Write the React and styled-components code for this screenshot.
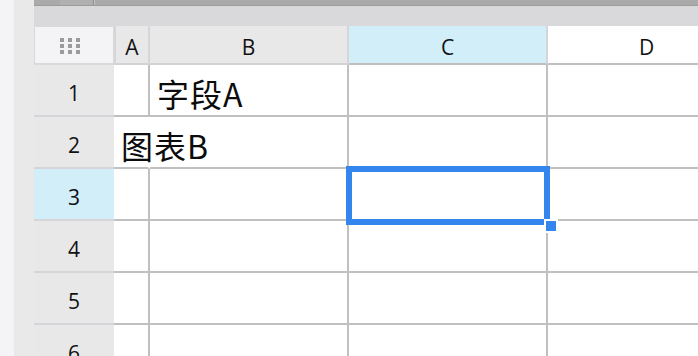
import React from "react";
import styled, { createGlobalStyle } from "styled-components";

const Global = createGlobalStyle`
  html, body { margin: 0; padding: 0; height: 100%; overflow: hidden; background: #ffffff; }
  body { font-family: "Open Sans", "Noto Sans CJK SC", sans-serif; }
  #root { height: 100%; }
`;

const GRID = "#c0c0c0";
const HEAD_BG = "#e8e8e8";
const HEAD_LINE = "#d6d6da";
const ACTIVE = "#d1eef9";
const BLUE = "#3585ef";

const Page = styled.div`
  display: flex;
  height: 356px;
  overflow: hidden;
`;

const Gutter = styled.div`
  flex: 0 0 14px;
  background: #f4f4f6;
`;

const Rail = styled.div`
  flex: 0 0 20px;
  background: #e9e9ea;
`;

const Main = styled.div`
  flex: 1;
  display: flex;
  flex-direction: column;
  min-width: 0;
  overflow: hidden;
`;

const TopBar = styled.div`
  height: 5px;
  flex: 0 0 5px;
  background: #aaaaaa;
  border-bottom: 1px solid #9c9c9c;
  display: flex;
`;

const TabThumb = styled.div`
  margin-left: 26px;
  width: 33px;
  background: #b0b0b0;
`;

const TabDivider = styled.div`
  width: 1px;
  background: #8e8e8e;
  border-right: 1px solid #c4c4c4;
`;

const Band = styled.div`
  height: 20px;
  flex: 0 0 20px;
  background: #d9d9db;
`;

const SheetWrap = styled.div`
  position: relative;
  flex: 1;
`;

const Sheet = styled.div`
  display: grid;
  grid-template-columns: 80px 36px 199px 199px 199px;
  grid-template-rows: 39px repeat(6, 52px);
  background: #ffffff;
`;

const Corner = styled.div`
  box-sizing: border-box;
  background: #f4f4f6;
  border: 1px solid #d9d9dd;
  border-bottom-width: 2px;
  display: flex;
  align-items: center;
  justify-content: center;
  padding-right: 8px;
  padding-top: 2px;
`;

const Dots = styled.div`
  display: grid;
  grid-template-columns: repeat(3, 4px);
  grid-auto-rows: 4px;
  column-gap: 4px;
  row-gap: 2px;
`;

const Dot = styled.span`
  background: #9b9b9b;
`;

const ColHeader = styled.div`
  box-sizing: border-box;
  background: ${(p) => (p.$active ? ACTIVE : p.$plain ? "#ffffff" : HEAD_BG)};
  border-right: 2px solid ${(p) => (p.$plain ? "transparent" : HEAD_LINE)};
  border-bottom: 2px solid ${(p) => (p.$plain || p.$active ? GRID : "#d3d3d6")};
  border-left: ${(p) => (p.$first ? `2px solid ${HEAD_LINE}` : "none")};
  display: flex;
  align-items: center;
  justify-content: center;
  padding-top: 5px;
  font-size: 21px;
  color: #111;
`;

const RowHeader = styled.div`
  box-sizing: border-box;
  background: ${(p) => (p.$active ? ACTIVE : HEAD_BG)};
  border-bottom: 2px solid ${HEAD_LINE};
  display: flex;
  align-items: center;
  justify-content: center;
  padding-top: 6px;
  font-size: 21px;
  color: #111;
`;

const Cell = styled.div`
  box-sizing: border-box;
  border-right: 2px solid ${(p) => (p.$open ? "transparent" : GRID)};
  border-bottom: 2px solid ${GRID};
  display: flex;
  align-items: flex-end;
  padding: 0 0 3px 7px;
  white-space: nowrap;
  overflow: visible;
  font-family: "Noto Sans CJK SC", "Noto Sans", sans-serif;
  font-size: 32px;
  letter-spacing: 1px;
  line-height: 1.2;
  color: #0c0c0c;
  min-width: 0;
`;

const Selection = styled.div`
  position: absolute;
  left: 312px;
  top: 140px;
  width: 204px;
  height: 59px;
  box-sizing: border-box;
  border: 6px solid ${BLUE};
  pointer-events: none;
`;

const Handle = styled.div`
  position: absolute;
  right: -12px;
  bottom: -12px;
  width: 10px;
  height: 10px;
  background: ${BLUE};
  box-shadow: 0 0 0 2px #ffffff;
`;

const columns = ["A", "B", "C", "D"];
const data = {
  1: { B: "字段A" },
  2: { A: "图表B" },
};

export default function App() {
  return (
    <>
      <Global />
      <Page>
        <Gutter />
        <Rail />
        <Main>
          <TopBar>
            <TabThumb />
            <TabDivider />
          </TopBar>
          <Band />
          <SheetWrap>
            <Sheet>
              <Corner>
                <Dots>
                  {Array.from({ length: 9 }).map((_, i) => (
                    <Dot key={i} />
                  ))}
                </Dots>
              </Corner>
              {columns.map((c, i) => (
                <ColHeader
                  key={c}
                  $first={i === 0}
                  $active={c === "C"}
                  $plain={c === "D"}
                >
                  {c}
                </ColHeader>
              ))}
              {[1, 2, 3, 4, 5, 6].map((r) => (
                <React.Fragment key={r}>
                  <RowHeader $active={r === 3}>{r}</RowHeader>
                  {columns.map((c) => {
                    const text = data[r] && data[r][c];
                    const open = r === 2 && c === "A";
                    return (
                      <Cell key={c} $open={open}>
                        {text}
                      </Cell>
                    );
                  })}
                </React.Fragment>
              ))}
            </Sheet>
            <Selection>
              <Handle />
            </Selection>
          </SheetWrap>
        </Main>
      </Page>
    </>
  );
}
